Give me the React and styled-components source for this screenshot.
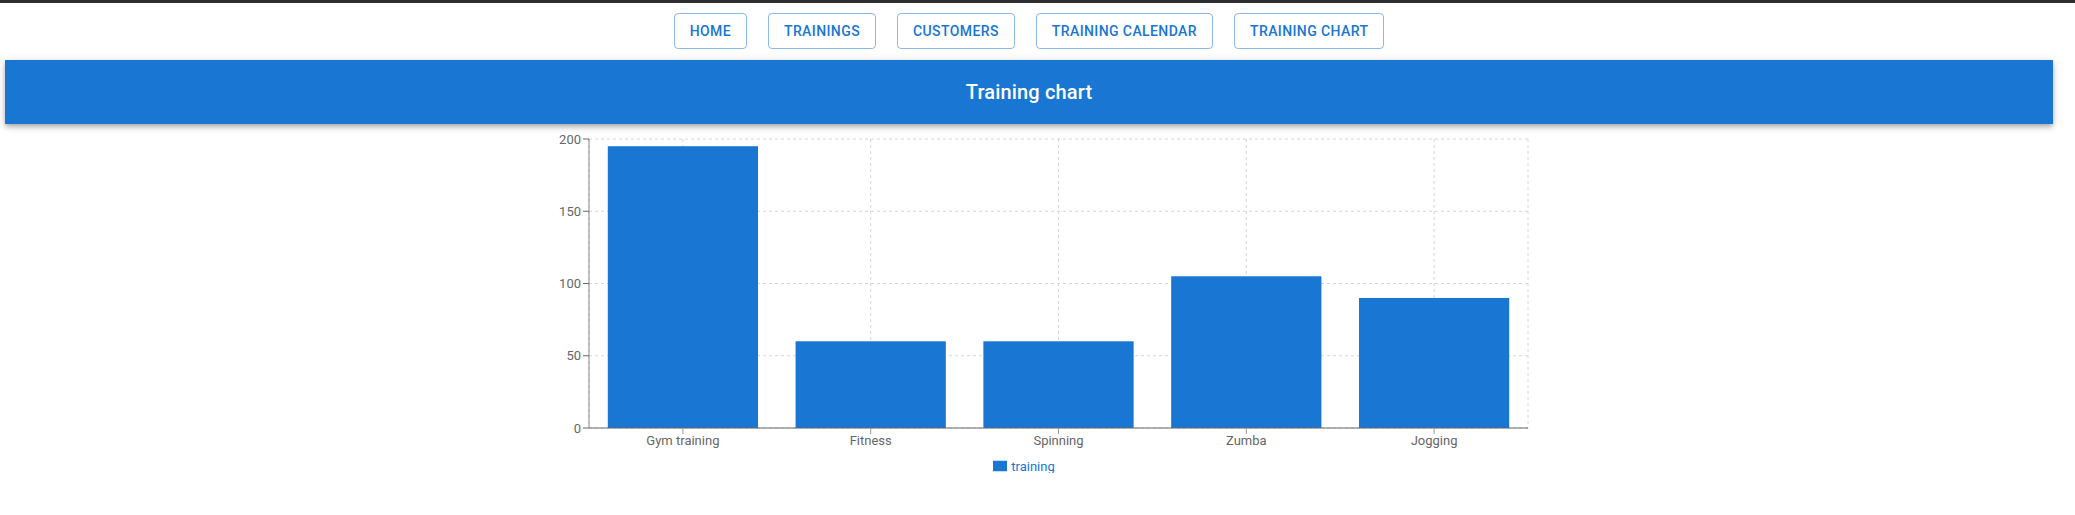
import React from 'react';
import styled, { createGlobalStyle } from 'styled-components';

const GlobalStyle = createGlobalStyle`
  html, body { margin: 0; padding: 0; background: #fff; }
  body { font-family: Roboto, "Noto Sans", "Liberation Sans", sans-serif; }
`;

const TopStrip = styled.div`
  height: 3px;
  background: #2e2e2e;
`;

const Page = styled.div`
  width: 2048px;
  margin-left: 5px;
`;

const Nav = styled.nav`
  display: flex;
  justify-content: center;
  gap: 21px;
  padding: 10px 0 11px;
`;

const NavButton = styled.button`
  font-family: Roboto, "Liberation Sans", sans-serif;
  font-weight: 500;
  font-size: 14px;
  line-height: 24px;
  letter-spacing: 0.02857em;
  text-transform: uppercase;
  color: #1976d2;
  background: transparent;
  border: 1px solid rgba(25, 118, 210, 0.5);
  border-radius: 4px;
  padding: 5px 15px;
  min-width: 64px;
  cursor: pointer;
`;

const AppBar = styled.header`
  height: 64px;
  background: #1976d2;
  color: #fff;
  display: flex;
  align-items: center;
  justify-content: center;
  box-shadow: 0px 2px 4px -1px rgba(0,0,0,0.2), 0px 4px 5px 0px rgba(0,0,0,0.14), 0px 1px 10px 0px rgba(0,0,0,0.12);
  position: relative;
`;

const Title = styled.h6`
  margin: 0;
  font-family: Roboto, "Liberation Sans", sans-serif;
  font-weight: 500;
  font-size: 20px;
  line-height: 1.6;
  letter-spacing: 0.0075em;
`;

const ChartArea = styled.section`
  display: flex;
  flex-direction: column;
  align-items: center;
`;

const ChartSvg = styled.svg`
  display: block;
  overflow: visible;
`;

const TickLabel = styled.text`
  font-family: Roboto, "Liberation Sans", sans-serif;
  font-size: 13px;
  fill: #666;
`;

const Legend = styled.ul`
  list-style: none;
  margin: 5px 0 0;
  padding: 0;
  display: flex;
  justify-content: center;
`;

const LegendItem = styled.li`
  display: flex;
  align-items: center;
  height: 14px;
  margin-right: 10px;
  font-size: 13px;
  color: ${(p) => p.$color};
`;

const LegendIcon = styled.svg`
  width: 14px;
  height: 14px;
  margin-right: 4px;
`;

const data = [
  { name: 'Gym training', value: 195 },
  { name: 'Fitness', value: 60 },
  { name: 'Spinning', value: 60 },
  { name: 'Zumba', value: 105 },
  { name: 'Jogging', value: 90 },
];

const BLUE = '#1976d2';
const W = 1000;
const H = 330;
const LEFT = 60;
const RIGHT = 999;
const TOP = 15;
const BOTTOM = 304;
const MAX = 200;

function Chart() {
  const plotW = RIGHT - LEFT;
  const band = plotW / data.length;
  const gap = band * 0.1;
  const yOf = (v) => BOTTOM - (v / MAX) * (BOTTOM - TOP);
  const ticks = [0, 50, 100, 150, 200];
  return (
    <ChartSvg width={W} height={H} viewBox={`0 0 ${W} ${H}`}>
      <g stroke="#d6d6d6" strokeDasharray="3 3" fill="none">
        {ticks.map((t) => (
          <line key={`h${t}`} x1={LEFT} x2={RIGHT} y1={yOf(t)} y2={yOf(t)} />
        ))}
        {data.map((d, i) => {
          const cx = LEFT + band * (i + 0.5);
          return <line key={`v${i}`} x1={cx} x2={cx} y1={TOP} y2={BOTTOM} />;
        })}
        <line x1={LEFT} x2={LEFT} y1={TOP} y2={BOTTOM} />
        <line x1={RIGHT} x2={RIGHT} y1={TOP} y2={BOTTOM} />
      </g>
      {data.map((d, i) => {
        const x = LEFT + band * i + gap;
        const y = yOf(d.value);
        return (
          <rect key={d.name} x={x} y={y} width={band - 2 * gap} height={BOTTOM - y} fill={BLUE} />
        );
      })}
      <line x1={LEFT} x2={LEFT} y1={TOP} y2={BOTTOM} stroke="#888" />
      {ticks.map((t) => (
        <g key={`yt${t}`}>
          <line x1={LEFT - 6} x2={LEFT} y1={yOf(t)} y2={yOf(t)} stroke="#666" />
          <TickLabel x={LEFT - 8} y={yOf(t)} dy="0.355em" textAnchor="end">{t}</TickLabel>
        </g>
      ))}
      <line x1={LEFT} x2={RIGHT} y1={BOTTOM} y2={BOTTOM} stroke="#666" />
      {data.map((d, i) => {
        const cx = LEFT + band * (i + 0.5);
        return (
          <g key={`xt${i}`}>
            <line x1={cx} x2={cx} y1={BOTTOM} y2={BOTTOM + 6} stroke="#999" />
            <TickLabel x={cx} y={BOTTOM + 8} dy="0.71em" textAnchor="middle">{d.name}</TickLabel>
          </g>
        );
      })}
    </ChartSvg>
  );
}

export default function App() {
  const links = ['Home', 'Trainings', 'Customers', 'Training calendar', 'Training chart'];
  return (
    <>
      <GlobalStyle />
      <TopStrip />
      <Page>
        <Nav>
          {links.map((l) => (
            <NavButton key={l}>{l}</NavButton>
          ))}
        </Nav>
        <AppBar>
          <Title>Training chart</Title>
        </AppBar>
        <ChartArea>
          <Chart />
          <Legend>
            <LegendItem $color={BLUE}>
              <LegendIcon viewBox="0 0 32 32">
                <path d="M0,4h32v24h-32z" fill={BLUE} />
              </LegendIcon>
              training
            </LegendItem>
          </Legend>
        </ChartArea>
      </Page>
    </>
  );
}
